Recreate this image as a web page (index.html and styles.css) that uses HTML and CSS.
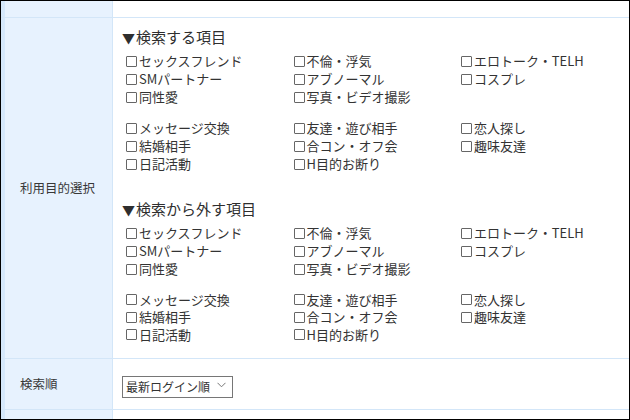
FILE: index.html
```html
<!DOCTYPE html>
<html lang="ja">
<head>
<meta charset="utf-8">
<link rel="stylesheet" href="styles.css">
</head>
<body>
<div class="frame">
  <div class="row row-top">
    <div class="label"></div>
    <div class="cell"></div>
  </div>
  <div class="row row-purpose">
    <div class="label">利用目的選択</div>
    <div class="cell cell-purpose">
      <div class="heading"><span class="tri">▼</span>検索する項目</div>
      <div class="group">
        <label class="item"><span class="box"></span>セックスフレンド</label>
        <label class="item"><span class="box"></span>不倫・浮気</label>
        <label class="item"><span class="box"></span>エロトーク・TELH</label>
        <label class="item"><span class="box"></span>SMパートナー</label>
        <label class="item"><span class="box"></span>アブノーマル</label>
        <label class="item"><span class="box"></span>コスプレ</label>
        <label class="item"><span class="box"></span>同性愛</label>
        <label class="item"><span class="box"></span>写真・ビデオ撮影</label>
      </div>
      <div class="group group-second">
        <label class="item"><span class="box"></span>メッセージ交換</label>
        <label class="item"><span class="box"></span>友達・遊び相手</label>
        <label class="item"><span class="box"></span>恋人探し</label>
        <label class="item"><span class="box"></span>結婚相手</label>
        <label class="item"><span class="box"></span>合コン・オフ会</label>
        <label class="item"><span class="box"></span>趣味友達</label>
        <label class="item"><span class="box"></span>日記活動</label>
        <label class="item"><span class="box"></span>H目的お断り</label>
      </div>
      <div class="heading heading-second"><span class="tri">▼</span>検索から外す項目</div>
      <div class="group">
        <label class="item"><span class="box"></span>セックスフレンド</label>
        <label class="item"><span class="box"></span>不倫・浮気</label>
        <label class="item"><span class="box"></span>エロトーク・TELH</label>
        <label class="item"><span class="box"></span>SMパートナー</label>
        <label class="item"><span class="box"></span>アブノーマル</label>
        <label class="item"><span class="box"></span>コスプレ</label>
        <label class="item"><span class="box"></span>同性愛</label>
        <label class="item"><span class="box"></span>写真・ビデオ撮影</label>
      </div>
      <div class="group group-second group-last">
        <label class="item"><span class="box"></span>メッセージ交換</label>
        <label class="item"><span class="box"></span>友達・遊び相手</label>
        <label class="item"><span class="box"></span>恋人探し</label>
        <label class="item"><span class="box"></span>結婚相手</label>
        <label class="item"><span class="box"></span>合コン・オフ会</label>
        <label class="item"><span class="box"></span>趣味友達</label>
        <label class="item"><span class="box"></span>日記活動</label>
        <label class="item"><span class="box"></span>H目的お断り</label>
      </div>
    </div>
  </div>
  <div class="row row-order">
    <div class="label">検索順</div>
    <div class="cell cell-order">
      <div class="select-wrap">
        <select class="select">
          <option>最新ログイン順</option>
        </select>
        <svg class="chevron" width="9" height="6" viewBox="0 0 9 6"><path d="M0.5 0.8 L4.5 4.8 L8.5 0.8" fill="none" stroke="#777" stroke-width="1"/></svg>
      </div>
    </div>
  </div>
  <div class="row row-bottom">
    <div class="label"></div>
    <div class="cell"></div>
  </div>
</div>
</body>
</html>
```
FILE: styles.css
```css
* { box-sizing: border-box; }
html, body { margin: 0; padding: 0; background: #fff; }
body {
  font-family: "Noto Sans CJK JP", "Noto Sans", sans-serif;
  color: #333;
}
.frame {
  width: 630px;
  height: 420px;
  overflow: hidden;
  border: 1px solid #000;
  display: flex;
  flex-direction: column;
  background: #fff;
}
.row {
  display: grid;
  grid-template-columns: 112px 1fr;
  border-bottom: 1px solid #d3e6f8;
}
.label {
  background: #e7f2fe;
  border-left: 4px solid #d5e8fb;
  border-right: 1px solid #d3e6f8;
  font-size: 12.5px;
  line-height: 18px;
  padding-left: 15px;
  display: flex;
  align-items: center;
  color: #383838;
}
.row-top { height: 17px; }
.row-purpose { height: 341px; }
.row-order { height: 51px; }
.row-bottom { flex: 1; border-bottom: none; }
.cell-purpose {
  padding: 9px 0 0 9px;
}
.heading {
  font-size: 15px;
  line-height: 20px;
  color: #2e2e2e;
  margin-bottom: 4px;
}
.tri {
  font-size: 13px;
  margin-right: 1px;
}
.heading-second { margin-top: 26px; }
.group {
  display: grid;
  grid-template-columns: 167.5px 167.5px 167.5px;
  padding-left: 4px;
}
.group-second { margin-top: 13px; }
.group-last .item { height: 17.6px; }
.item {
  font-size: 13px;
  line-height: 18px;
  height: 18px;
  display: flex;
  align-items: center;
  white-space: nowrap;
  color: #333;
}
.box {
  display: inline-block;
  width: 11px;
  height: 11px;
  border: 1px solid #666;
  border-radius: 1px;
  margin-right: 2px;
  background: #fff;
  flex: none;
}
.cell-order {
  display: flex;
  align-items: center;
  padding-left: 9px;
}
.select-wrap {
  position: relative;
  width: 111px;
  height: 22px;
  margin-top: -1px;
}
.select {
  appearance: none;
  -webkit-appearance: none;
  width: 111px;
  height: 22px;
  border: 1px solid #767676;
  border-radius: 0;
  background: #fff;
  font-family: "Noto Sans CJK JP", sans-serif;
  font-size: 12px;
  color: #333;
  padding: 0 0 0 3px;
  margin: 0;
  line-height: 20px;
}
.chevron {
  position: absolute;
  right: 7px;
  top: 9px;
  pointer-events: none;
}
```
